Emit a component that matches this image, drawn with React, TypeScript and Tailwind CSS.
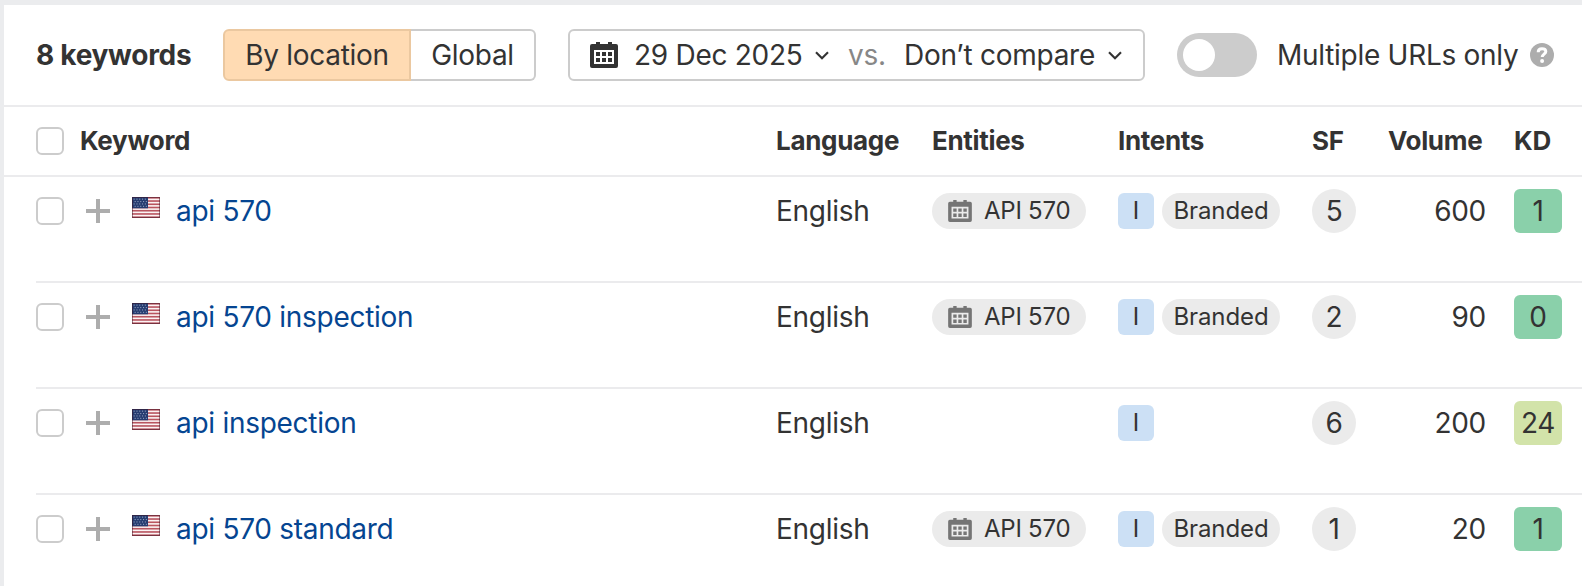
import React from "react";

type Row = {
  keyword: string;
  language: string;
  entity?: string;
  branded?: boolean;
  sf: number;
  volume: number;
  kd: number;
};

const rows: Row[] = [
  { keyword: "api 570", language: "English", entity: "API 570", branded: true, sf: 5, volume: 600, kd: 1 },
  { keyword: "api 570 inspection", language: "English", entity: "API 570", branded: true, sf: 2, volume: 90, kd: 0 },
  { keyword: "api inspection", language: "English", sf: 6, volume: 200, kd: 24 },
  { keyword: "api 570 standard", language: "English", entity: "API 570", branded: true, sf: 1, volume: 20, kd: 1 },
];

const columns =
  "grid grid-cols-[740px_156px_186px_194px_76px_98px_28px_48px] items-center";

function CalendarIcon({ className }: { className?: string }) {
  return (
    <svg viewBox="0 0 28 26" className={className} fill="currentColor">
      <path
        fillRule="evenodd"
        d="M6 0h4v2h8V0h4v2h4a2 2 0 0 1 2 2v20a2 2 0 0 1-2 2H2a2 2 0 0 1-2-2V4a2 2 0 0 1 2-2h4zM4 8v14h20V8z"
      />
      <path d="M6 10h4v4H6zM12 10h4v4h-4zM18 10h4v4h-4zM6 16h4v4H6zM12 16h4v4h-4zM18 16h4v4h-4z" />
    </svg>
  );
}

function Chevron() {
  return (
    <svg viewBox="0 0 14 9" className="h-[9px] w-[14px]" fill="none" stroke="#333" strokeWidth="2.1">
      <path d="M1 1.2l6 6 6-6" />
    </svg>
  );
}

function Flag() {
  return (
    <svg viewBox="0 0 28 21" className="h-[21px] w-7">
      <rect width="28" height="21" fill="#fbf3f4" />
      {[0, 1, 2, 3, 4, 5, 6].map((i) => (
        <rect key={i} y={i * 3.23} width="28" height="1.62" fill="#b95560" />
      ))}
      <rect width="16" height="11.3" fill="#263c70" />
      {[0, 1, 2, 3].map((r) =>
        [0, 1, 2, 3, 4].map((c) => (
          <rect key={`${r}-${c}`} x={1.6 + c * 2.8 + (r % 2)} y={1.6 + r * 2.4} width="1.1" height="1.1" fill="#8c9abb" />
        )),
      )}
      <rect x="0.5" y="0.5" width="27" height="20" fill="none" stroke="#3a1020" strokeOpacity="0.5" />
    </svg>
  );
}

function Checkbox() {
  return <span className="box-border size-7 shrink-0 rounded-[6px] border-2 border-[#ccc] bg-white" />;
}

export default function App() {
  return (
    <div className="h-[586px] w-[1582px] overflow-hidden bg-[#ebecee] pt-[5px] pl-1 font-['Inter',sans-serif] text-[28px] leading-[36px] tracking-[-0.28px] text-[#333]">
      <main className="h-full bg-white">
        <header className="flex h-[102px] items-center border-b-2 border-[#ebebed] pl-8 whitespace-nowrap">
          <h1 className="w-[187px] text-[28px] font-bold tracking-[-0.28px]">8 keywords</h1>
          <div className="flex h-[52px] w-[313px]">
            <button className="w-[188px] rounded-l-[6px] border-2 border-[#ebc8a0] bg-[#ffdbb3]">By location</button>
            <button className="flex-1 rounded-r-[6px] border-2 border-l-0 border-[#ccc]">Global</button>
          </div>
          <div className="ml-8 flex h-[52px] w-[577px] items-center rounded-[6px] border-2 border-[#ccc] pl-5">
            <CalendarIcon className="h-[26px] w-7" />
            <span className="ml-4 w-[181px]">29 Dec 2025</span>
            <Chevron />
            <span className="ml-[19px] w-14 text-[#878787]">vs.</span>
            <span className="w-[204px]">Don’t compare</span>
            <Chevron />
          </div>
          <div className="ml-8 flex h-11 w-20 items-center rounded-full bg-[#ccc] pl-1.5">
            <span className="size-8 rounded-full bg-white" />
          </div>
          <span className="ml-5 w-[253px]">Multiple URLs only</span>
          <svg viewBox="0 0 24 24" className="size-6">
            <circle cx="12" cy="12" r="12" fill="#adadad" />
            <path
              d="M8.2 9.2C8.2 6.8 9.9 5.7 12 5.7c2.2 0 3.8 1.1 3.8 2.9 0 2.5-3.6 2.7-3.6 5.5"
              fill="none"
              stroke="#fff"
              strokeWidth="3"
            />
            <circle cx="12.1" cy="18.1" r="2" fill="#fff" />
          </svg>
        </header>

        <div className={`${columns} h-[70px] border-b-2 border-[#ebebed] pl-8 text-[26px] font-bold tracking-[-0.32px]`}>
          <div className="flex items-center gap-4">
            <Checkbox />
            Keyword
          </div>
          <div>Language</div>
          <div>Entities</div>
          <div>Intents</div>
          <div>SF</div>
          <div className="pr-1 text-right">Volume</div>
          <div />
          <div>KD</div>
        </div>

        {rows.map((row) => (
          <div key={row.keyword} className="ml-8 h-[106px] border-b-2 border-[#ebebed] pt-3">
            <div className={`${columns} h-11`}>
              <div className="flex items-center">
                <Checkbox />
                <svg viewBox="0 0 24 24" className="ml-[22px] size-6">
                  <path d="M10 0h4v10h10v4H14v10h-4V14H0v-4h10z" fill="#adadad" />
                </svg>
                <span className="mr-4 ml-[22px] pb-[7px]">
                  <Flag />
                </span>
                <a className="text-[#054591]">{row.keyword}</a>
              </div>
              <div>{row.language}</div>
              <div>
                {row.entity && (
                  <span className="flex h-9 w-[154px] items-center rounded-full bg-[#ebebeb] pl-4 text-[24px] tracking-[-0.24px]">
                    <CalendarIcon className="mr-3 h-[22px] w-6 text-[#757575]" />
                    {row.entity}
                  </span>
                )}
              </div>
              <div className="flex gap-2 text-[24px] tracking-[-0.1px]">
                <span className="flex size-9 items-center justify-center rounded-[6px] bg-[#cce0f5]">I</span>
                {row.branded && (
                  <span className="flex h-9 w-[118px] items-center justify-center rounded-full bg-[#ebebeb]">
                    Branded
                  </span>
                )}
              </div>
              <div>
                <span className="flex size-11 items-center justify-center rounded-full bg-[#ebebeb]">{row.sf}</span>
              </div>
              <div className="text-right">{row.volume}</div>
              <div />
              <div
                className={`flex h-11 w-12 items-center justify-center rounded-[6px] ${
                  row.kd < 10 ? "bg-[#8ad0aa]" : "bg-[#d2e3a9]"
                }`}
              >
                {row.kd}
              </div>
            </div>
          </div>
        ))}
      </main>
    </div>
  );
}
